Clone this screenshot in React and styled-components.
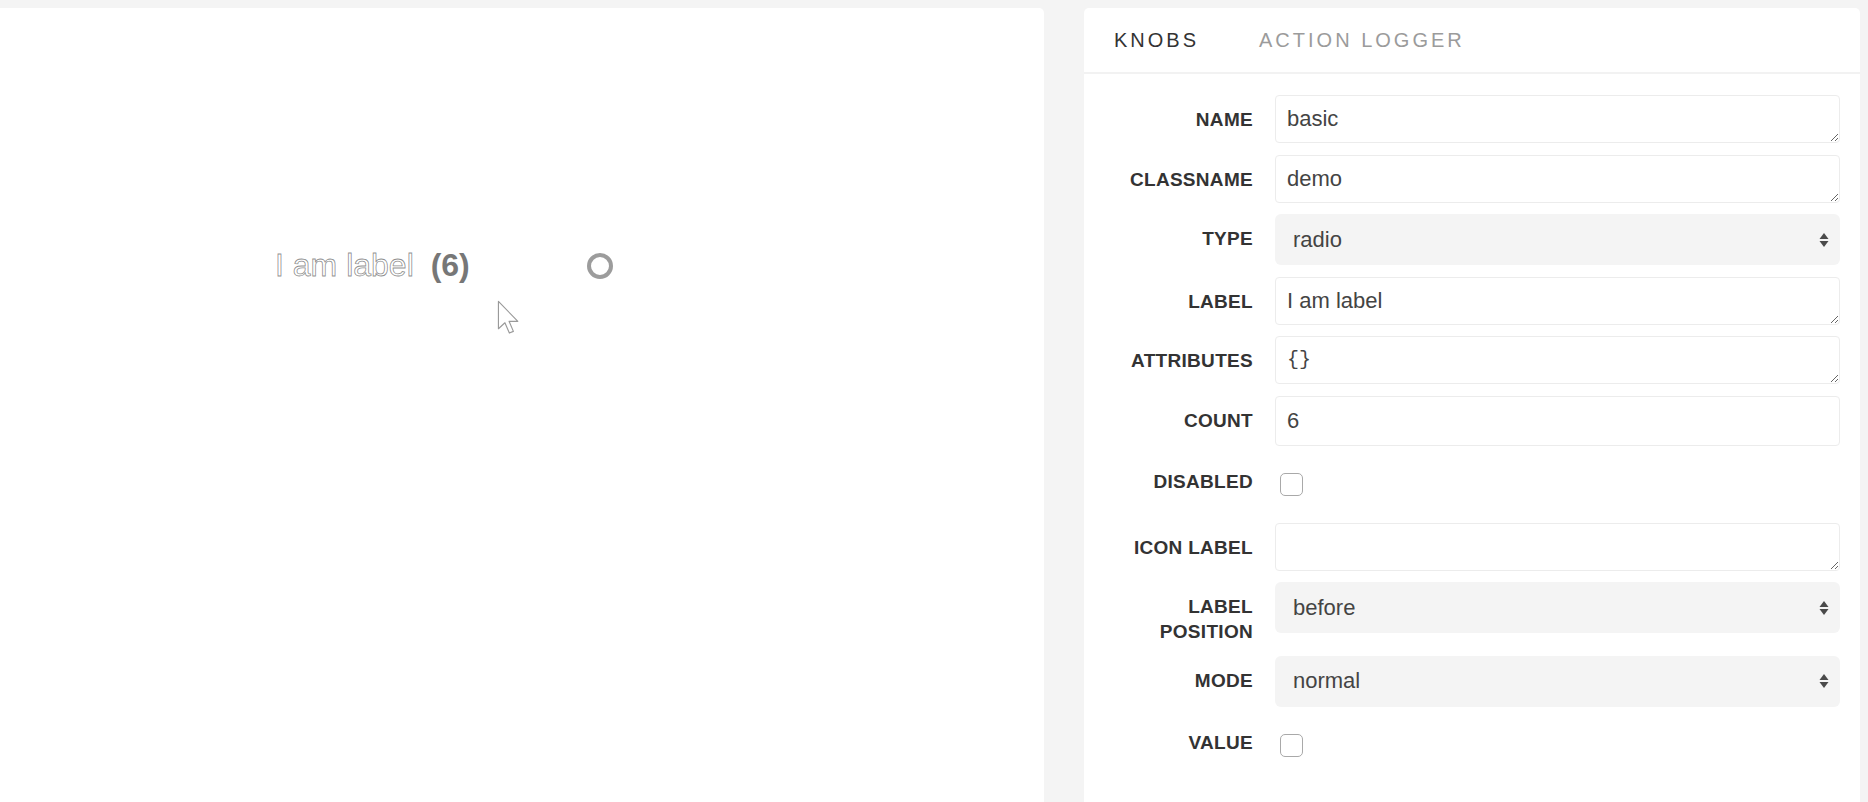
import styled, { createGlobalStyle } from "styled-components"

const GlobalStyle = createGlobalStyle`
    html, body {
        margin: 0;
        padding: 0;
        background: #f4f4f4;
        overflow: hidden;
    }

    * {
        box-sizing: border-box;
    }
`

const knobs = [
    { label: "NAME", kind: "text", value: "basic" },
    { label: "CLASSNAME", kind: "text", value: "demo" },
    { label: "TYPE", kind: "select", value: "radio" },
    { label: "LABEL", kind: "text", value: "I am label" },
    { label: "ATTRIBUTES", kind: "text", value: "{}", mono: true },
    { label: "COUNT", kind: "number", value: "6" },
    { label: "DISABLED", kind: "check" },
    { label: "ICON LABEL", kind: "text", value: "" },
    { label: "LABEL POSITION", kind: "select", value: "before" },
    { label: "MODE", kind: "select", value: "normal" },
    { label: "VALUE", kind: "check" },
]

function Control({ knob }){
    const { kind, value, mono } = knob

    if(kind === "select"){
        return(
            <SelectBox>
                <span>{value}</span>
                <svg width="10" height="18" viewBox="0 0 10 18">
                    <path d="M5 2 L9.5 8 L0.5 8 Z" fill="#4a4a4a" />
                    <path d="M5 16 L9.5 10 L0.5 10 Z" fill="#4a4a4a" />
                </svg>
            </SelectBox>
        )
    }

    if(kind === "check"){
        return(
            <CheckCell>
                <CheckBox type="checkbox" readOnly />
            </CheckCell>
        )
    }

    if(kind === "number"){
        return <NumberInput type="text" defaultValue={value} />
    }

    return <TextArea defaultValue={value} mono={mono ? 1 : 0} spellCheck={false} />
}

export default function App(){
    return(
        <>
            <GlobalStyle />
            <Page>
                <Preview>
                    <RadioRow>
                        <RadioText>
                            I am label <strong>(6)</strong>
                        </RadioText>
                        <RadioCircle />
                    </RadioRow>
                    <Cursor width="23" height="36" viewBox="0 0 16 25">
                        <path
                            d="M1 1 L1 20 L5.5 15.8 L8.6 23 L11.4 21.8 L8.4 14.8 L14.5 14.8 Z"
                            fill="#fff"
                            stroke="#9a9a9a"
                            strokeWidth="0.8"
                            strokeLinejoin="round"
                        />
                    </Cursor>
                </Preview>

                <Panel>
                    <TabBar>
                        <Tab active>KNOBS</Tab>
                        <Tab>ACTION LOGGER</Tab>
                    </TabBar>

                    <Form>
                        {knobs.map(knob => (
                            <Row key={knob.label}>
                                <Label>{knob.label}</Label>
                                <Control knob={knob} />
                            </Row>
                        ))}
                    </Form>
                </Panel>
            </Page>
        </>
    )
}

const Page = styled.div`
    display: flex;
    gap: 40px;
    height: 830px;
    padding: 8px 8px 0 0;
    font-family: "Liberation Sans", Arial, sans-serif;
`

const Preview = styled.div`
    position: relative;
    flex: 0 0 1044px;
    background: #fff;
    border-radius: 0 5px 0 0;
    padding: 239px 0 0 275px;
`

const RadioRow = styled.div`
    display: flex;
    align-items: center;
    gap: 117px;
`

const RadioText = styled.span`
    font-size: 32px;
    line-height: 37px;
    color: #fff;
    -webkit-text-stroke: 0.8px rgba(105, 105, 105, 0.75);

    strong {
        margin-left: 8px;
        color: #777;
        -webkit-text-stroke: 0;
        font-weight: 700;
    }
`

const RadioCircle = styled.span`
    width: 26px;
    height: 26px;
    border: 4px solid #9c9c9c;
    border-radius: 50%;
    background: #fff;
`

const Cursor = styled.svg`
    position: absolute;
    top: 292px;
    left: 497px;
`

const Panel = styled.div`
    flex: 1;
    background: #fff;
    border-radius: 5px;
    display: flex;
    flex-direction: column;
`

const TabBar = styled.div`
    height: 66px;
    display: flex;
    align-items: center;
    gap: 60px;
    padding-left: 30px;
    border-bottom: 2px solid #f2f2f2;
`

const Tab = styled.span`
    font-size: 20px;
    letter-spacing: 3px;
    color: ${props => props.active ? "#333" : "#9b9b9b"};
`

const Form = styled.div`
    padding: 21px 20px 0 20px;
    display: flex;
    flex-direction: column;
    gap: 11.5px;
`

const Row = styled.div`
    display: flex;
    align-items: flex-start;
    gap: 22px;
`

const Label = styled.div`
    flex: 0 0 149px;
    padding-top: 13px;
    text-align: right;
    font-size: 19px;
    line-height: 24.5px;
    font-weight: 700;
    letter-spacing: 0.3px;
    color: #333;
`

const fieldBase = `
    flex: 1;
    border: 1px solid #ececec;
    border-radius: 4px;
    background: #fff;
    color: #444;
    outline: none;
    margin: 0;
`

const TextArea = styled.textarea`
    ${fieldBase}
    height: 48px;
    padding: 10px 11px 0;
    font-family: ${props => props.mono ? '"Liberation Mono", "DejaVu Sans Mono", monospace' : '"Liberation Sans", Arial, sans-serif'};
    font-size: ${props => props.mono ? "20px" : "22px"};
    line-height: 26px;
    resize: vertical;
    overflow: hidden;
`

const NumberInput = styled.input`
    ${fieldBase}
    height: 50px;
    padding: 0 11px;
    font-family: "Liberation Sans", Arial, sans-serif;
    font-size: 22px;
`

const SelectBox = styled.div`
    flex: 1;
    height: 51px;
    display: flex;
    align-items: center;
    justify-content: space-between;
    padding: 0 11px 0 18px;
    background: #f4f4f4;
    border-radius: 6px;
    font-size: 22px;
    color: #444;
`

const CheckCell = styled.div`
    flex: 1;
    padding: 16px 0 15px 5px;
    display: flex;
`

const CheckBox = styled.input`
    appearance: none;
    margin: 0;
    width: 23px;
    height: 23px;
    border: 1px solid #a9a9a9;
    border-radius: 5px;
    background: #fff;
`
